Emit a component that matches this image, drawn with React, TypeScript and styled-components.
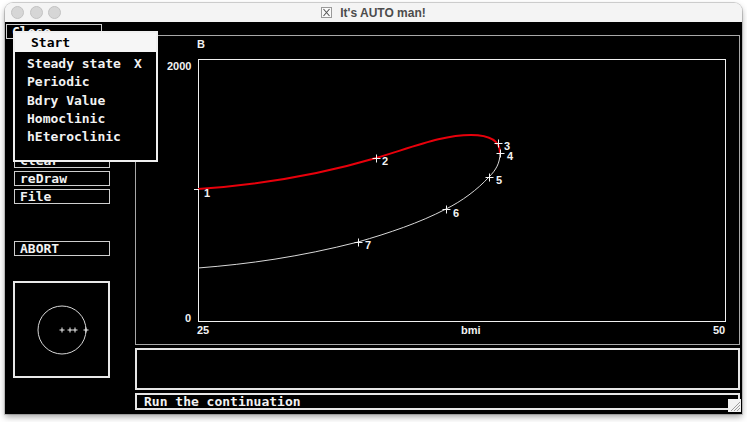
import styled, { createGlobalStyle } from 'styled-components';

const GlobalStyle = createGlobalStyle`
  html, body {
    margin: 0;
    padding: 0;
    background: #ffffff;
  }
  body {
    width: 747px;
    height: 422px;
    overflow: hidden;
  }
`;

const Window = styled.div`
  margin: 3px 0 0 5px;
  width: 737px;
  height: 411px;
  display: flex;
  flex-direction: column;
  border-radius: 8px 8px 0 0;
  overflow: hidden;
  box-shadow: 0 0 0 1px rgba(0, 0, 0, 0.16), 0 3px 6px rgba(0, 0, 0, 0.35);
`;

const TitleBar = styled.div`
  height: 19px;
  flex: none;
  display: grid;
  grid-template-columns: 1fr auto 1fr;
  align-items: center;
  background: #f4f4f4;
  font-family: 'Liberation Sans', Arial, sans-serif;
`;

const Lights = styled.div`
  display: flex;
  gap: 5.5px;
  padding-left: 6px;
`;

const Light = styled.span`
  width: 11px;
  height: 11px;
  border-radius: 50%;
  background: #d6d6d6;
  border: 0.5px solid #c2c2c2;
`;

const Title = styled.div`
  display: flex;
  align-items: center;
  gap: 8px;
  font-size: 12px;
  font-weight: bold;
  color: #4c4c4c;
`;

const Content = styled.div`
  position: relative;
  flex: 1;
  background: #000;
  display: grid;
  grid-template-columns: 130px 605px;
  font-family: 'DejaVu Sans Mono', 'Liberation Mono', monospace;
  font-weight: bold;
  font-size: 13px;
  color: #f2f2f2;
`;

const LeftColumn = styled.div`
  display: flex;
  flex-direction: column;
  padding-top: 2px;
`;

const Button = styled.div<{ $left?: number; $top?: number }>`
  width: 96px;
  height: 15px;
  box-sizing: border-box;
  margin-left: ${(p) => p.$left ?? 9}px;
  margin-top: ${(p) => p.$top ?? 3}px;
  border: 1px solid #cfcfcf;
  padding-left: 5px;
  line-height: 13px;
  white-space: nowrap;
  overflow: hidden;
`;

const Scope = styled.div`
  margin: 25px 0 0 8px;
  width: 97px;
  height: 97px;
  box-sizing: border-box;
  border: 2px solid #e8e8e8;
`;

const RightColumn = styled.div`
  display: flex;
  flex-direction: column;
  padding-top: 13px;
  gap: 3px;
`;

const GraphPanel = styled.div`
  height: 310px;
  box-sizing: border-box;
  border: 1px solid #a8a8a8;
  svg {
    display: block;
  }
`;

const MessageBox = styled.div`
  height: 42px;
  box-sizing: border-box;
  border: 2px solid #e6e6e6;
`;

const StatusBar = styled.div`
  height: 17px;
  box-sizing: border-box;
  border: 2px solid #e6e6e6;
  padding-left: 7px;
  line-height: 13px;
`;

const Grip = styled.div`
  position: absolute;
  right: 1px;
  bottom: 2px;
  width: 13px;
  height: 13px;
  background: #f2f2f2;
  svg {
    display: block;
  }
`;

const Menu = styled.div`
  position: absolute;
  left: 8px;
  top: 9px;
  width: 145px;
  height: 131px;
  box-sizing: border-box;
  border: 2px solid #f0f0f0;
  background: #000;
`;

const MenuTitle = styled.div`
  height: 19px;
  background: #f6f6f6;
  color: #000;
  padding-left: 16px;
  line-height: 19px;
`;

const MenuList = styled.div`
  padding: 3px 0 0 12px;
`;

const MenuItem = styled.div`
  display: flex;
  height: 18.3px;
  line-height: 18.3px;
  white-space: pre;
`;

const Mark = styled.span`
  margin-left: 13px;
`;

const cross = (x: number, y: number, s = 4) =>
  `M${x - s},${y}H${x + s}M${x},${y - s}V${y + s}`;

const points: [number, number, string, number, number][] = [
  [377, 158, '2', 383, 165],
  [499, 143, '3', 505, 150],
  [501, 153, '4', 508, 160],
  [490, 177, '5', 497, 184],
  [447, 209, '6', 454, 217],
  [359, 242, '7', 366, 249],
];

function Chart() {
  const label = {
    fill: '#f2f2f2',
    fontFamily: "'Liberation Sans', Arial, sans-serif",
    fontWeight: 700,
    fontSize: 11,
  } as const;
  return (
    <svg width="603" height="308">
      <g transform="translate(-137 -36)">
        <rect x="199.5" y="59.5" width="527" height="262" fill="none" stroke="#f0f0f0" />
        <text x="198" y="48" {...label}>B</text>
        <text x="168" y="70" {...label}>2000</text>
        <text x="186" y="322" {...label}>0</text>
        <text x="198" y="334" {...label}>25</text>
        <text x="462" y="334" {...label}>bmi</text>
        <text x="714" y="334" {...label}>50</text>

        <path
          d="M199,189 C270,184 330,172 377,158 C420,145 445,135 472,135 C492,135 501,141 501,153"
          fill="none"
          stroke="#e8000b"
          strokeWidth="2"
        />
        <path
          d="M501,153 C501,163 497,170 490,177 C478,190 463,201 447,209 C420,223 390,233 359,242 C300,257 250,264 199,268"
          fill="none"
          stroke="#d8d8d8"
          strokeWidth="1"
        />
        <path d="M195,189.5H200" stroke="#f0f0f0" />
        <text x="205" y="197" {...label}>1</text>
        {points.map(([x, y, n, tx, ty]) => (
          <g key={n}>
            <path d={cross(x + 0.5, y + 0.5)} stroke="#f4f4f4" strokeWidth="1" />
            <text x={tx} y={ty} {...label}>{n}</text>
          </g>
        ))}
      </g>
    </svg>
  );
}

export default function App() {
  return (
    <>
      <GlobalStyle />
      <Window>
        <TitleBar>
          <Lights>
            <Light />
            <Light />
            <Light />
          </Lights>
          <Title>
            <svg width="11" height="11" viewBox="0 0 11 11">
              <rect x="0.5" y="0.5" width="10" height="10" fill="#fafafa" stroke="#9a9a9a" />
              <path d="M2.5,2 L8.5,9 M8.5,2 L2.5,9" stroke="#555" strokeWidth="1.1" />
            </svg>
            It's AUTO man!
          </Title>
          <span />
        </TitleBar>
        <Content>
          <LeftColumn>
            <Button $left={1} $top={0}>Close</Button>
            {/* the buttons between Close and Clear sit under the Start menu */}
            <Button $top={114}>Clear</Button>
            <Button>reDraw</Button>
            <Button>File</Button>
            <Button $top={37}>ABORT</Button>
            <Scope>
              <svg width="93" height="93">
                <g transform="translate(-16 -283)">
                  <circle cx="63" cy="330" r="24" fill="none" stroke="#d8d8d8" />
                  {[63, 71, 76, 87].map((x) => (
                    <path key={x} d={cross(x, 330, 2.5)} stroke="#f0f0f0" />
                  ))}
                </g>
              </svg>
            </Scope>
          </LeftColumn>
          <RightColumn>
            <GraphPanel>
              <Chart />
            </GraphPanel>
            <MessageBox />
            <StatusBar>Run the continuation</StatusBar>
          </RightColumn>
          <Menu>
            <MenuTitle>Start</MenuTitle>
            <MenuList>
              <MenuItem>
                Steady state<Mark>X</Mark>
              </MenuItem>
              <MenuItem>Periodic</MenuItem>
              <MenuItem>Bdry Value</MenuItem>
              <MenuItem>Homoclinic</MenuItem>
              <MenuItem>hEteroclinic</MenuItem>
            </MenuList>
          </Menu>
          <Grip>
            <svg width="13" height="13">
              <path d="M3,12 L12,3 M6,12 L12,6 M9,12 L12,9" stroke="#9c9c9c" />
            </svg>
          </Grip>
        </Content>
      </Window>
    </>
  );
}
